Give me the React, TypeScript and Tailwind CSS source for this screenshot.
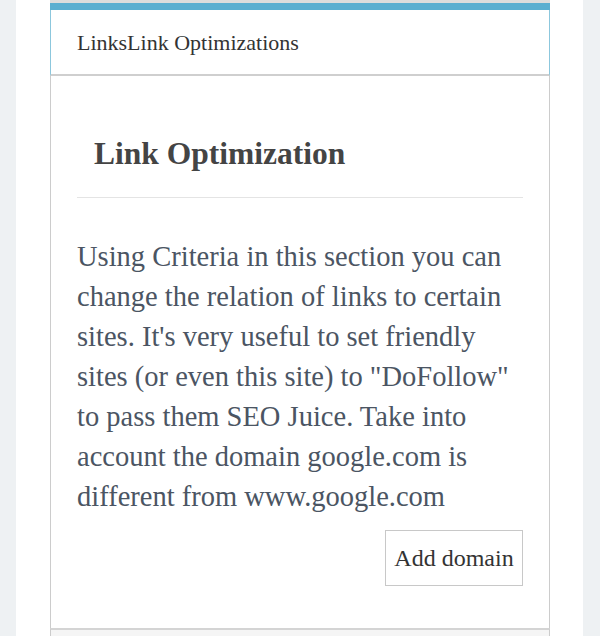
export default function App() {
  const serif = { fontFamily: '"Liberation Serif", "DejaVu Serif", serif' }
  return (
    <div className="min-h-[636px] bg-[#eef1f3] flex" style={serif}>
      <div className="ml-[16px] w-[567px] bg-white pl-[34px] pr-[33px]">
        <div className="w-[500px] border-t-[3px] border-[#dcdcdc]">
          <div className="h-[7px] bg-[#5aaed0]" />
          <div className="h-[66px] border-x border-[#8cc7dd] border-b-2 border-b-[#cfcfcf] flex items-center pl-[26px] text-[22px] text-[#333]">
            LinksLink Optimizations
          </div>
          <div className="border-x border-[#cccccc] h-[552px] px-[26px]">
            <h2 className="pl-[17px] pt-[58px] pb-[23px] text-[31.5px] font-bold text-[#444] leading-[40px]">
              Link Optimization
            </h2>
            <div className="h-px bg-[#e4e4e4]" />
            <p className="mt-[39px] text-[28.5px] leading-[40px] text-[#4b5563]">
              Using Criteria in this section you can change the relation of links to certain sites. It's very useful to set friendly sites (or even this site) to "DoFollow" to pass them SEO Juice. Take into account the domain google.com is different from www.google.com
            </p>
            <div className="flex justify-end mt-[13px]">
              <button className="h-[56px] w-[138px] border border-[#c8c8c8] bg-white text-[24px] text-[#333]">
                Add domain
              </button>
            </div>
          </div>
          <div className="border-t-2 border-[#d4d4d4] h-[10px] bg-[#f5f5f5] border-x border-x-[#cccccc]" />
        </div>
      </div>
    </div>
  )
}
